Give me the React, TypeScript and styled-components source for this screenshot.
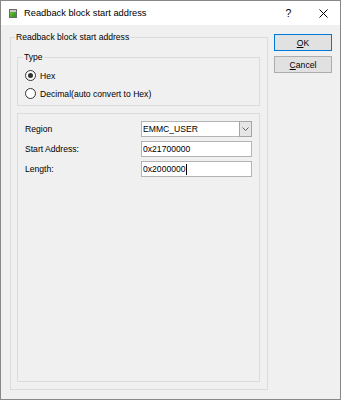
import React from "react";
import styled, { createGlobalStyle } from "styled-components";

const GlobalStyle = createGlobalStyle`
  html, body { margin: 0; padding: 0; background: #f0f0f0; }
  body {
    font-family: "Liberation Sans", Arial, sans-serif;
    font-size: 8.6px;
    color: #000;
  }
  * { box-sizing: border-box; }
`;

const Window = styled.div`
  width: 341px;
  height: 400px;
  border: 1px solid #888;
  background: #f0f0f0;
  display: flex;
  flex-direction: column;
`;

const TitleBar = styled.div`
  height: 24px;
  flex-shrink: 0;
  background: #fff;
  display: flex;
  align-items: center;
`;

const AppIconBox = styled.svg`
  margin-left: 8px;
  flex-shrink: 0;
`;

const Title = styled.span`
  margin-left: 7px;
  flex: 1;
  font-size: 9.3px;
  white-space: nowrap;
`;

const CaptionButton = styled.div<{ $w: number }>`
  width: ${(p) => p.$w}px;
  height: 100%;
  display: flex;
  align-items: center;
  justify-content: center;
  font-size: 10.5px;
`;

const Body = styled.div`
  flex: 1;
  min-height: 0;
  display: flex;
  gap: 6px;
  padding: 6px 7px 9px 9px;
`;

const GroupBox = styled.fieldset`
  margin: 0;
  min-width: 0;
  width: 258px;
  border: 1px solid #dcdcdc;
  padding: 8px 7px 7px 6px;
  display: flex;
  flex-direction: column;
  gap: 7px;
`;

const TypeBox = styled.fieldset`
  margin: 0;
  min-width: 0;
  border: 1px solid #dcdcdc;
  padding: 4px 7px 3px 7px;
  display: flex;
  flex-direction: column;
  gap: 1px;
`;

const Legend = styled.legend`
  padding: 0 1px;
  margin-left: -2px;
  line-height: 12px;
  font-size: 8.6px;
`;

const RadioRow = styled.label`
  height: 17px;
  display: flex;
  align-items: center;
  gap: 4px;
`;

const RadioCircle = styled.span<{ $checked?: boolean }>`
  width: 11px;
  height: 11px;
  border-radius: 50%;
  border: 1px solid #333;
  background: #fff;
  display: flex;
  align-items: center;
  justify-content: center;
  &::after {
    content: "";
    width: 5px;
    height: 5px;
    border-radius: 50%;
    background: ${(p) => (p.$checked ? "#333" : "transparent")};
  }
`;

const FormBox = styled.div`
  flex: 1;
  border: 1px solid #dcdcdc;
  padding: 7px 0 0 7px;
  display: grid;
  grid-template-columns: 116px 111px;
  grid-auto-rows: 16px;
  row-gap: 4px;
  align-content: start;
`;

const FieldLabel = styled.span`
  display: flex;
  align-items: center;
`;

const Field = styled.div`
  height: 16px;
  background: #fff;
  border: 1px solid #b4b4b4;
  padding-left: 1px;
  display: flex;
  align-items: center;
  line-height: 14px;
  white-space: nowrap;
`;

const ComboText = styled.span`
  flex: 1;
`;

const DropButton = styled.span`
  width: 13px;
  align-self: stretch;
  margin: -1px -1px -1px 0;
  border: 1px solid #a6a6a6;
  background: #e6e6e6;
  display: flex;
  align-items: center;
  justify-content: center;
`;

const Caret = styled.span`
  display: inline-block;
  width: 1px;
  height: 11px;
  background: #000;
`;

const ButtonColumn = styled.div`
  width: 58px;
  padding-top: 3px;
  display: flex;
  flex-direction: column;
  gap: 5px;
`;

const DialogButton = styled.div<{ $default?: boolean }>`
  height: 17px;
  border: 1px solid ${(p) => (p.$default ? "#0078d7" : "#adadad")};
  background: #e1e1e1;
  display: flex;
  align-items: center;
  justify-content: center;
`;

const Mnemonic = styled.span`
  text-decoration: underline;
`;

export default function App() {
  return (
    <>
      <GlobalStyle />
      <Window>
        <TitleBar>
          <AppIconBox width="8" height="9" viewBox="0 0 8 9">
            <defs>
              <linearGradient id="g" x1="0" y1="0" x2="1" y2="1">
                <stop offset="0" stopColor="#7ccf3a" />
                <stop offset="1" stopColor="#2f8a1a" />
              </linearGradient>
            </defs>
            <rect x="0.5" y="0.5" width="7" height="8" fill="url(#g)" stroke="#6b6b6b" />
            <rect x="1" y="1" width="6" height="2" fill="#c8c8c8" />
          </AppIconBox>
          <Title>Readback block start address</Title>
          <CaptionButton $w={35}>?</CaptionButton>
          <CaptionButton $w={34}>
            <svg width="9" height="9" viewBox="0 0 9 9">
              <path d="M0.5 0.5 L8.5 8.5 M8.5 0.5 L0.5 8.5" stroke="#000" strokeWidth="1" />
            </svg>
          </CaptionButton>
        </TitleBar>
        <Body>
          <GroupBox>
            <Legend>Readback block start address</Legend>
            <TypeBox>
              <Legend>Type</Legend>
              <RadioRow>
                <RadioCircle $checked />
                Hex
              </RadioRow>
              <RadioRow>
                <RadioCircle />
                Decimal(auto convert to Hex)
              </RadioRow>
            </TypeBox>
            <FormBox>
              <FieldLabel>Region</FieldLabel>
              <Field>
                <ComboText>EMMC_USER</ComboText>
                <DropButton>
                  <svg width="7" height="4" viewBox="0 0 7 4">
                    <path d="M0.5 0.5 L3.5 3.5 L6.5 0.5" fill="none" stroke="#606060" />
                  </svg>
                </DropButton>
              </Field>
              <FieldLabel>Start Address:</FieldLabel>
              <Field>0x21700000</Field>
              <FieldLabel>Length:</FieldLabel>
              <Field>
                0x2000000
                <Caret />
              </Field>
            </FormBox>
          </GroupBox>
          <ButtonColumn>
            <DialogButton $default>
              <Mnemonic>O</Mnemonic>K
            </DialogButton>
            <DialogButton>
              <Mnemonic>C</Mnemonic>ancel
            </DialogButton>
          </ButtonColumn>
        </Body>
      </Window>
    </>
  );
}
